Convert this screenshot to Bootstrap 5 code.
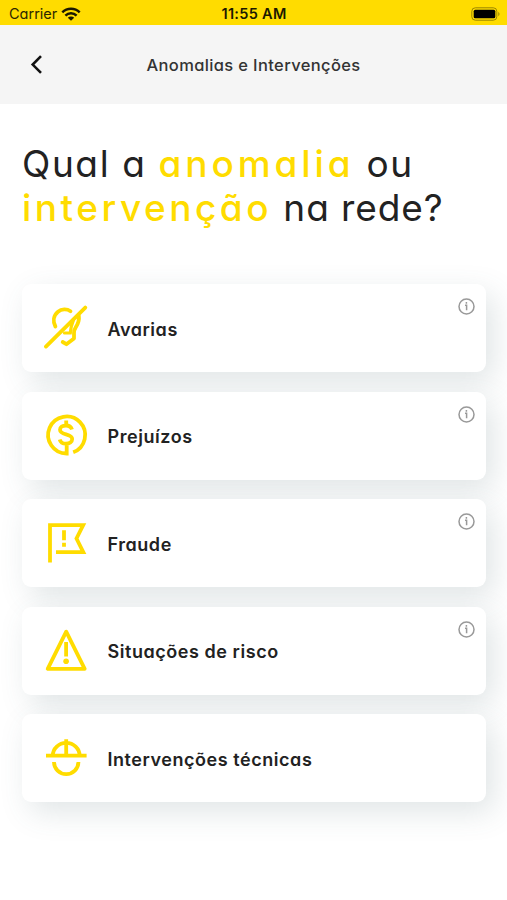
<!DOCTYPE html>
<html lang="pt">
<head>
<meta charset="utf-8">
<meta name="viewport" content="width=device-width, initial-scale=1">
<title>Anomalias e Intervenções</title>
<link href="https://cdn.jsdelivr.net/npm/bootstrap@5.3.0/dist/css/bootstrap.min.css" rel="stylesheet">
<style>
body{font-family:Inter,"Liberation Sans",sans-serif;font-feature-settings:"cv11","ss03";color:#222;background:#fff;min-height:900px;overflow:hidden}
.status{height:25px;background:#ffdc00;font-size:14.5px;padding:2px 6px 0 9px;color:#2c2700}
.status>div{flex:1 1 0}
.clock{font-size:14.5px;letter-spacing:.3px;color:#1c1900;margin-right:2px}
.topbar{height:79px;background:#f5f5f5;padding:0 30px}
.topbar h1{font-size:16.5px;letter-spacing:.36px;color:#333;padding-top:2px}
.side{width:13px}
.question{font-size:37px;line-height:44px;font-weight:400;padding:38px 0 0 22px;height:180px;white-space:nowrap}
.hl{color:#ffdc00;font-weight:500}
.w1{letter-spacing:1.6px}.w2{letter-spacing:3.9px}.w3{letter-spacing:.9px}.w4{letter-spacing:3.5px}
.options{gap:19.5px;padding:0 21px 0 22px}
.option{height:88px;border-radius:9px;padding-left:20px;box-shadow:8px 10px 30px rgba(70,100,105,.17);background:#fff}
.option .title{font-size:18px;font-weight:600;letter-spacing:.55px;margin-left:17.5px;padding-top:2.5px}
.pic{width:48px;height:48px;fill:none;stroke:#ffdc00;stroke-width:3.8}
.pic .solid{fill:#ffdc00;stroke:none}
.info{top:14px;right:11px;width:17px;height:17px}
</style>
</head>
<body>
<header>
<div class="status d-flex align-items-center">
<div class="d-flex align-items-center"><span>Carrier</span>
<svg class="ms-1" width="20" height="14" viewBox="0 0 20 14" fill="none" stroke="#1c1900" stroke-width="2.5"><path d="M1.3 5.3a12.4 12.4 0 0 1 17.4 0M4.4 8.6a8 8 0 0 1 11.2 0"/><path d="M10 13.7 6.8 10.7a4.6 4.6 0 0 1 6.4 0z" fill="#1c1900" stroke="none"/></svg></div>
<span class="clock fw-semibold">11:55 AM</span>
<div class="d-flex justify-content-end"><svg width="30" height="14" viewBox="0 0 30 14"><rect x=".8" y=".8" width="25" height="12.4" rx="3.5" fill="none" stroke="#9a8500"/><rect x="2.7" y="2.7" width="21.6" height="8.6" rx="1.6"/><path d="M27.3 4.7q2.4 2.3 0 4.6z" fill="#9a8500"/></svg></div>
</div>
<nav class="topbar d-flex align-items-center justify-content-between">
<svg class="side" width="13" height="20" viewBox="0 0 13 20" fill="none" stroke="#111" stroke-width="2.6"><path d="m11 1.2-8.3 8.4 8.3 8.3"/></svg>
<h1 class="m-0 fw-medium">Anomalias e Intervenções</h1>
<span class="side"></span>
</nav>
</header>
<main>
<h2 class="question m-0"><span class="w1">Qual a </span><span class="hl w2">anomalia</span><span class="w1"> ou</span><br><span class="hl w4">intervenção</span><span class="w3"> na rede?</span></h2>
<div class="options d-flex flex-column">
<div class="option d-flex align-items-center position-relative">
<svg class="pic" viewBox="0 0 48 48" stroke-linecap="round"><path d="M3.9 42.6 43.3 3.6M28.5 7.2C25 4.8 19.5 4.8 16 7.7 11.2 11.7 10.8 17.5 13.4 22.5M36.8 11.5C37.6 17 36 20 33.7 23.3Q31.9 26 32 29v5.500l-7.6 5.7-3.7-2.2" stroke-linejoin="round"/><path d="M31.500 16 29.3 22.5 28.3 29H22.5" stroke-width="3.2"/></svg>
<span class="title">Avarias</span>
<svg class="info position-absolute" viewBox="0 0 17 17" fill="none" stroke="#999" stroke-width="1.5"><circle cx="8.5" cy="8.5" r="7.5"/><path d="M7 7.3h1.6v5M8.4 4v1.7"/></svg>
</div>
<div class="option d-flex align-items-center position-relative">
<svg class="pic" viewBox="0 0 48 48"><path d="M31.2 40.3A18.5 18.5 0 1 0 24.7 41.5V31M24.2 8.5v5M30 17.5C29 14.5 26 13.5 24 13.5c-3.5 0-6 1.7-6 4.3 0 6 12.2 3.3 12.2 9.3 0 2.8-2.7 4.6-6.2 4.6-3 0-5.5-1.3-6.3-4.3"/></svg>
<span class="title">Prejuízos</span>
<svg class="info position-absolute" viewBox="0 0 17 17" fill="none" stroke="#999" stroke-width="1.5"><circle cx="8.5" cy="8.5" r="7.5"/><path d="M7 7.3h1.6v5M8.4 4v1.7"/></svg>
</div>
<div class="option d-flex align-items-center position-relative">
<svg class="pic" viewBox="0 0 48 48"><path d="M8 43.5V6.2h33.2L34.5 19.5l6.8 13.7H14M22 11.3v10M22 23.7v4"/></svg>
<span class="title">Fraude</span>
<svg class="info position-absolute" viewBox="0 0 17 17" fill="none" stroke="#999" stroke-width="1.5"><circle cx="8.5" cy="8.5" r="7.5"/><path d="M7 7.3h1.6v5M8.4 4v1.7"/></svg>
</div>
<div class="option d-flex align-items-center position-relative">
<svg class="pic" viewBox="0 0 48 48"><path stroke-linejoin="round" d="M24.2 4.7 5.7 41.8h37z"/><path d="M24.1 15v14.5"/><circle class="solid" cx="24.1" cy="34.3" r="2.8"/></svg>
<span class="title">Situações de risco</span>
<svg class="info position-absolute" viewBox="0 0 17 17" fill="none" stroke="#999" stroke-width="1.5"><circle cx="8.5" cy="8.5" r="7.5"/><path d="M7 7.3h1.6v5M8.4 4v1.7"/></svg>
</div>
<div class="option d-flex align-items-center position-relative">
<svg class="pic" viewBox="0 0 48 48"><path d="M4 21.7h40.6M10.8 21.5A13.4 12.700 0 0 1 37.6 21.5M24.2 5.300V21M12 28A12.200 12.200 0 0 0 36.400 28"/></svg>
<span class="title">Intervenções técnicas</span>
</div>
</div>
</main>
<script src="https://cdn.jsdelivr.net/npm/bootstrap@5.3.0/dist/js/bootstrap.bundle.min.js"></script>
</body>
</html>
